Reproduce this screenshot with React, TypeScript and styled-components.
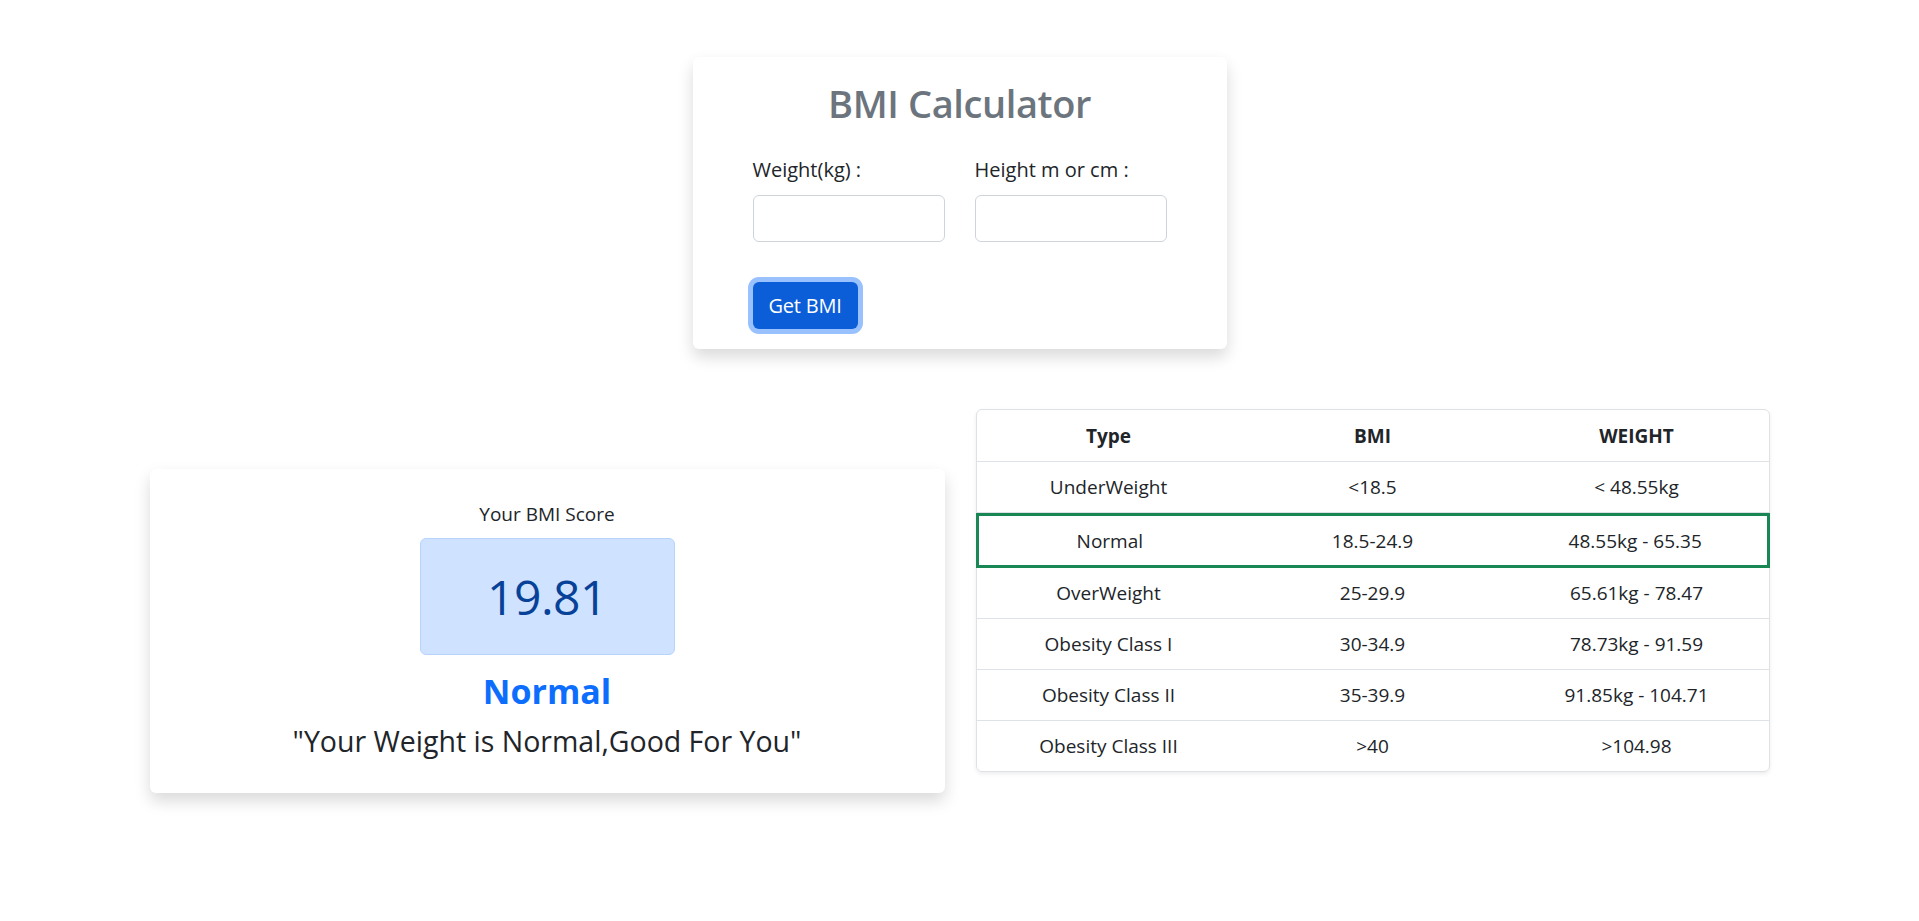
import React from "react";
import styled, { createGlobalStyle } from "styled-components";

const GlobalStyle = createGlobalStyle`
  html, body {
    margin: 0;
    padding: 0;
    background: #ffffff;
    font-family: "Open Sans", "Liberation Sans", sans-serif;
    color: #212529;
  }
  * { box-sizing: border-box; }
`;

const Page = styled.div`
  width: 1919px;
  min-height: 921px;
  padding-top: 57px;
  display: flex;
  flex-direction: column;
  align-items: center;
`;

const FormCard = styled.div`
  width: 534px;
  background: #fff;
  border-radius: 6px;
  box-shadow: 0 0.5rem 1rem rgba(0, 0, 0, 0.15);
  padding: 22px 60px 20px;
  display: flex;
  flex-direction: column;
`;

const Title = styled.h1`
  margin: 0;
  font-size: 38px;
  line-height: 48px;
  font-weight: 600;
  letter-spacing: -0.4px;
  color: #6c757d;
  text-align: center;
`;

const Fields = styled.div`
  display: grid;
  grid-template-columns: 1fr 1fr;
  column-gap: 30px;
  margin-top: 28px;
`;

const Field = styled.div`
  display: flex;
  flex-direction: column;
`;

const Label = styled.label`
  font-size: 20px;
  line-height: 30px;
  color: #212529;
  margin-bottom: 10px;
`;

const Input = styled.input`
  height: 47px;
  width: 100%;
  border: 1px solid #ced4da;
  border-radius: 6px;
  font-size: 20px;
  padding: 0 16px;
  font-family: inherit;
  outline: none;
`;

const Button = styled.button`
  align-self: flex-start;
  margin-top: 40px;
  height: 47px;
  padding: 0 16px;
  border: none;
  border-radius: 6px;
  background: #0b5ed7;
  color: #fff;
  font-family: inherit;
  font-size: 20px;
  letter-spacing: -0.2px;
  box-shadow: 0 0 0 5px #98c1fe;
  cursor: pointer;
`;

const Bottom = styled.div`
  width: 1620px;
  margin-top: 60px;
  display: grid;
  grid-template-columns: 795px 794px;
  column-gap: 31px;
  align-items: start;
`;

const ResultCard = styled.div`
  margin-top: 60px;
  background: #fff;
  border-radius: 6px;
  box-shadow: 0 0.5rem 1rem rgba(0, 0, 0, 0.15);
  padding: 31px 20px 35px;
  display: flex;
  flex-direction: column;
  align-items: center;
`;

const ScoreLabel = styled.div`
  font-size: 19px;
  line-height: 28px;
  color: #212529;
`;

const ScoreBox = styled.div`
  margin-top: 10px;
  width: 255px;
  height: 117px;
  background: #cfe2ff;
  border: 1px solid #b6d4fe;
  border-radius: 6px;
  color: #084298;
  display: flex;
  align-items: center;
  justify-content: center;
  font-size: 48px;
  font-weight: 400;
  letter-spacing: -0.5px;
`;

const Category = styled.div`
  margin-top: 15px;
  font-size: 34px;
  line-height: 43px;
  font-weight: 700;
  color: #0d6efd;
`;

const Quote = styled.div`
  margin-top: 11px;
  font-size: 28.5px;
  line-height: 34px;
  color: #212529;
`;

const Table = styled.div`
  border: 1px solid #dee2e6;
  border-radius: 6px;
  box-shadow: 0 0.125rem 0.25rem rgba(0, 0, 0, 0.075);
  display: flex;
  flex-direction: column;
`;

const Row = styled.div<{ $active?: boolean; $head?: boolean; $last?: boolean }>`
  display: grid;
  grid-template-columns: 1fr 1fr 1fr;
  height: ${(p) => (p.$active ? 55 : p.$last ? 50 : p.$head ? 52 : 51)}px;
  border-bottom: ${(p) => (p.$last || p.$active ? "none" : "1px solid #dee2e6")};
  ${(p) => (p.$active ? `border: 3px solid #198754; margin: 0 -1px;` : "")}
  font-weight: ${(p) => (p.$head ? 700 : 400)};
`;

const Cell = styled.div`
  display: flex;
  align-items: center;
  justify-content: center;
  font-size: 19px;
  color: #212529;
`;

const rows = [
  ["UnderWeight", "<18.5", "< 48.55kg"],
  ["Normal", "18.5-24.9", "48.55kg - 65.35"],
  ["OverWeight", "25-29.9", "65.61kg - 78.47"],
  ["Obesity Class I", "30-34.9", "78.73kg - 91.59"],
  ["Obesity Class II", "35-39.9", "91.85kg - 104.71"],
  ["Obesity Class III", ">40", ">104.98"],
];

export default function App() {
  return (
    <>
      <GlobalStyle />
      <Page>
        <FormCard>
          <Title>BMI Calculator</Title>
          <Fields>
            <Field>
              <Label>Weight(kg) :</Label>
              <Input type="text" />
            </Field>
            <Field>
              <Label>Height m or cm :</Label>
              <Input type="text" />
            </Field>
          </Fields>
          <Button>Get BMI</Button>
        </FormCard>
        <Bottom>
          <ResultCard>
            <ScoreLabel>Your BMI Score</ScoreLabel>
            <ScoreBox>19.81</ScoreBox>
            <Category>Normal</Category>
            <Quote>"Your Weight is Normal,Good For You"</Quote>
          </ResultCard>
          <Table>
            <Row $head>
              <Cell>Type</Cell>
              <Cell>BMI</Cell>
              <Cell>WEIGHT</Cell>
            </Row>
            {rows.map((r, i) => (
              <Row key={r[0]} $active={i === 1} $last={i === rows.length - 1}>
                <Cell>{r[0]}</Cell>
                <Cell>{r[1]}</Cell>
                <Cell>{r[2]}</Cell>
              </Row>
            ))}
          </Table>
        </Bottom>
      </Page>
    </>
  );
}
